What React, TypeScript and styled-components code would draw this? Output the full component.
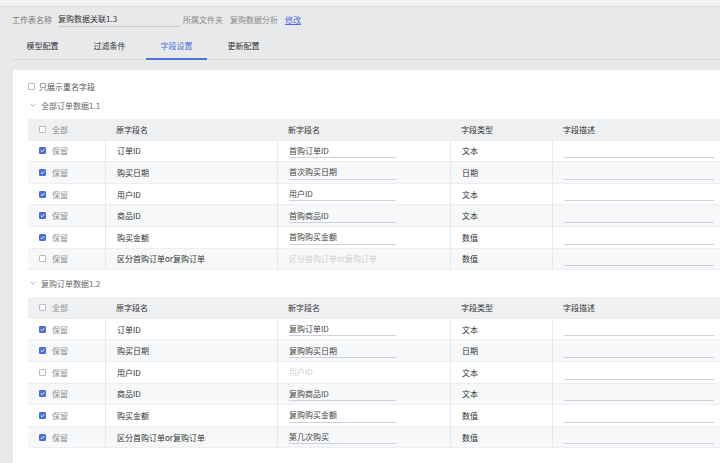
import React from 'react'
import styled, { createGlobalStyle } from 'styled-components'

const Global = createGlobalStyle`
  html, body { margin: 0; padding: 0; }
  body {
    background: #e8e9eb;
    font-family: "Noto Sans CJK SC", "Liberation Sans", sans-serif;
    font-size: 8px;
    color: #333;
    overflow: hidden;
  }
`

const Page = styled.div`
  width: 720px;
  height: 463px;
  display: flex;
  flex-direction: column;
  overflow: hidden;
`

const TopStrip = styled.div`
  height: 6px;
  background: #f2f3f5;
  border-bottom: 1px solid #dcdee2;
`

const Header = styled.div`
  padding: 0 0 0 12px;
`

const InfoRow = styled.div`
  display: flex;
  align-items: center;
  height: 25px;
`

const Label = styled.span`
  color: #777;
  margin-right: 6px;
`

const NameInput = styled.div`
  width: 122px;
  margin-right: 3px;
  padding: 0 0 2px 0;
  border-bottom: 1px solid #c8cace;
  color: #333;
`

const Muted = styled.span`
  color: #888;
  margin-right: 7px;
`

const LinkText = styled.a`
  color: #4b73d8;
  text-decoration: underline;
`

const Tabs = styled.div`
  display: flex;
  gap: 6px;
  height: 27px;
  border-bottom: 1px solid #d9dbdf;
`

const Tab = styled.div<{ $active?: boolean }>`
  width: 61px;
  display: flex;
  align-items: center;
  justify-content: center;
  color: ${p => (p.$active ? '#4b73d8' : '#333')};
  border-bottom: 2px solid ${p => (p.$active ? '#4b73d8' : 'transparent')};
  margin-bottom: -1px;
`

const Panel = styled.div`
  flex: 1;
  margin: 10px 0 0 13px;
  background: #fff;
  padding: 10px 0 0 15px;
`

const Option = styled.div`
  display: flex;
  align-items: center;
  gap: 4px;
  height: 12px;
  color: #555;
`

const SectionTitle = styled.div`
  display: flex;
  align-items: center;
  height: 14px;
  margin: 6px 0 7px 2px;
  color: #666;
  gap: 5px;
`

const Box = styled.span<{ $checked?: boolean }>`
  width: 7px;
  height: 7px;
  box-sizing: border-box;
  flex: none;
  border: 1px solid ${p => (p.$checked ? '#4b6fd8' : '#b9bcc2')};
  background: ${p => (p.$checked ? '#4b6fd8' : '#fff')};
  border-radius: 1px;
  display: inline-flex;
  align-items: center;
  justify-content: center;
`

const Table = styled.div`
  width: 720px;
`

const Row = styled.div<{ $head?: boolean; $alt?: boolean }>`
  display: grid;
  grid-template-columns: 77px 172px 173px 102px 196px;
  height: 21.6px;
  background: ${p => (p.$head ? '#eff0f2' : p.$alt ? '#f7f8f9' : '#fff')};
  border-bottom: 1px solid #eceef1;
  box-sizing: border-box;
`

const Cell = styled.div<{ $line?: boolean }>`
  display: flex;
  align-items: center;
  padding-left: 11px;
  gap: 6px;
  border-left: ${p => (p.$line ? '1px solid #e6e8eb' : 'none')};
`

const KeepText = styled.span`
  color: #8a8d92;
`

const FieldInput = styled.div<{ $w: number; $disabled?: boolean }>`
  width: ${p => p.$w}px;
  align-self: stretch;
  display: flex;
  align-items: center;
  box-sizing: border-box;
  border-bottom: 1px solid ${p => (p.$disabled ? 'transparent' : '#cdd0dd')};
  margin: 3px 0;
  color: ${p => (p.$disabled ? '#cfd1d4' : '#444')};
`

function Check({ checked }: { checked?: boolean }) {
  return (
    <Box $checked={checked}>
      {checked && (
        <svg width="5" height="5" viewBox="0 0 10 10">
          <path d="M1.5 5.2 L4 7.6 L8.6 2.4" fill="none" stroke="#fff" strokeWidth="1.8" />
        </svg>
      )}
    </Box>
  )
}

function Chevron() {
  return (
    <svg width="6" height="4" viewBox="0 0 12 8">
      <path d="M1 1.5 L6 6.5 L11 1.5" fill="none" stroke="#888" strokeWidth="1.3" />
    </svg>
  )
}

type Field = { keep: boolean; src: string; dst: string; type: string }

const first: Field[] = [
  { keep: true, src: '订单ID', dst: '首购订单ID', type: '文本' },
  { keep: true, src: '购买日期', dst: '首次购买日期', type: '日期' },
  { keep: true, src: '用户ID', dst: '用户ID', type: '文本' },
  { keep: true, src: '商品ID', dst: '首购商品ID', type: '文本' },
  { keep: true, src: '购买金额', dst: '首购购买金额', type: '数值' },
  { keep: false, src: '区分首购订单or复购订单', dst: '区分首购订单or复购订单', type: '数值' },
]

const second: Field[] = [
  { keep: true, src: '订单ID', dst: '复购订单ID', type: '文本' },
  { keep: true, src: '购买日期', dst: '复购购买日期', type: '日期' },
  { keep: false, src: '用户ID', dst: '用户ID', type: '文本' },
  { keep: true, src: '商品ID', dst: '复购商品ID', type: '文本' },
  { keep: true, src: '购买金额', dst: '复购购买金额', type: '数值' },
  { keep: true, src: '区分首购订单or复购订单', dst: '第几次购买', type: '数值' },
]

function FieldTable({ rows }: { rows: Field[] }) {
  return (
    <Table>
      <Row $head>
        <Cell>
          <Check />
          <KeepText>全部</KeepText>
        </Cell>
        <Cell>原字段名</Cell>
        <Cell>新字段名</Cell>
        <Cell>字段类型</Cell>
        <Cell>字段描述</Cell>
      </Row>
      {rows.map((r, i) => (
        <Row key={i} $alt={i % 2 === 1}>
          <Cell>
            <Check checked={r.keep} />
            <KeepText>保留</KeepText>
          </Cell>
          <Cell $line>{r.src}</Cell>
          <Cell $line>
            <FieldInput $w={107} $disabled={!r.keep}>
              {r.dst}
            </FieldInput>
          </Cell>
          <Cell $line>{r.type}</Cell>
          <Cell $line>
            <FieldInput $w={150} />
          </Cell>
        </Row>
      ))}
    </Table>
  )
}

export default function App() {
  return (
    <Page>
      <Global />
      <TopStrip />
      <Header>
        <InfoRow>
          <Label>工作表名称</Label>
          <NameInput>复购数据关联1.3</NameInput>
          <Muted>所属文件夹</Muted>
          <Muted>复购数据分析</Muted>
          <LinkText href="#">修改</LinkText>
        </InfoRow>
        <Tabs>
          <Tab>模型配置</Tab>
          <Tab>过滤条件</Tab>
          <Tab $active>字段设置</Tab>
          <Tab>更新配置</Tab>
        </Tabs>
      </Header>
      <Panel>
        <Option>
          <Check />
          只展示重名字段
        </Option>
        <SectionTitle>
          <Chevron />
          全部订单数据1.1
        </SectionTitle>
        <FieldTable rows={first} />
        <SectionTitle>
          <Chevron />
          复购订单数据1.2
        </SectionTitle>
        <FieldTable rows={second} />
      </Panel>
    </Page>
  )
}
